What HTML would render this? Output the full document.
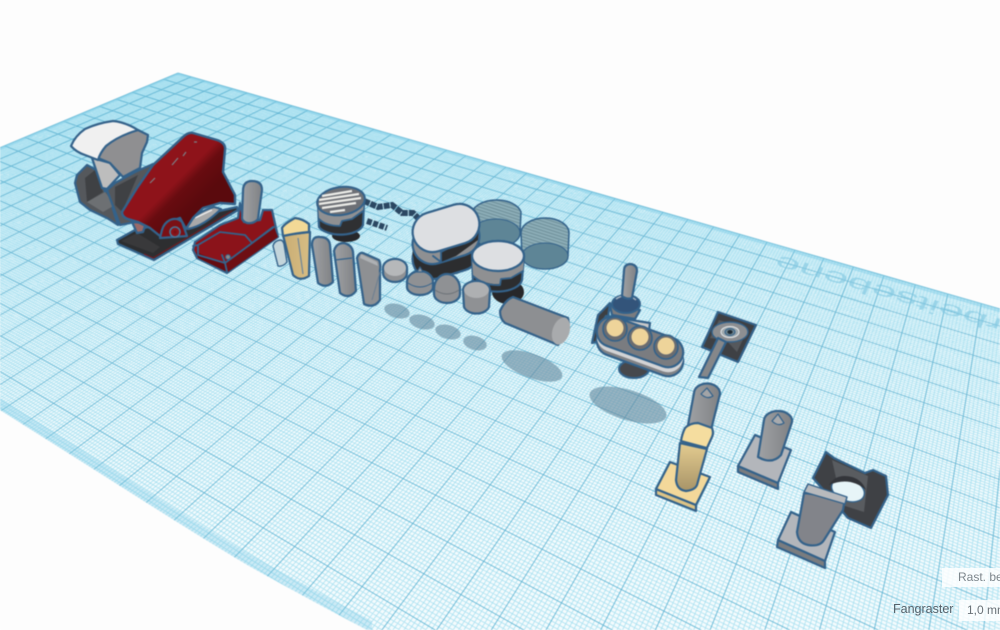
<!DOCTYPE html>
<html><head><meta charset="utf-8"><style>
html,body{margin:0;padding:0;background:#fdfdfd;width:1000px;height:630px;overflow:hidden}
#s{position:absolute;left:0;top:0;filter:blur(.5px)}
.o{stroke:#34628a;stroke-width:2.2;stroke-linejoin:round;stroke-linecap:round}
.t{stroke:#34628a;stroke-width:1.8;fill:none;stroke-linejoin:round;stroke-linecap:round}
.ui{position:absolute;font-family:"Liberation Sans",sans-serif;font-size:12px;white-space:nowrap}
</style></head><body>
<svg id="s" width="1000" height="630" viewBox="0 0 1000 630" xmlns="http://www.w3.org/2000/svg">
<defs>
<linearGradient id="red" gradientUnits="userSpaceOnUse" x1="172" y1="157" x2="208" y2="193"><stop offset="0.4" stop-color="#8e131a"/><stop offset="0.6" stop-color="#680c10"/><stop offset="1" stop-color="#5a0a0d"/></linearGradient>
<linearGradient id="cy" x1="0" y1="0" x2="1" y2="0"><stop offset="0" stop-color="#a0a2a5"/><stop offset="1" stop-color="#7f8184"/></linearGradient>
<linearGradient id="tn" x1="0" y1="0" x2="1" y2="0"><stop offset="0" stop-color="#c9ad74"/><stop offset="1" stop-color="#d7bd84"/></linearGradient>
<linearGradient id="tn2" x1="0" y1="0" x2="0" y2="1"><stop offset="0" stop-color="#e4cc90"/><stop offset="1" stop-color="#a89468"/></linearGradient>
<pattern id="h" width="3" height="3" patternUnits="userSpaceOnUse" patternTransform="rotate(18)"><rect width="3" height="3" fill="#8fb0ba"/><rect width="3" height="1.4" fill="#74959f"/></pattern>
</defs>
<g id="grid"></g>
<text transform="matrix(-1.03,-.295,.2,-.44,778,255)" text-anchor="end" font-family="Liberation Sans,sans-serif" font-size="42" fill="#7fc6e0" fill-opacity=".62">Arbeitsebene</text>

<!-- shadows -->
<g fill="#66899e" fill-opacity=".62">
<ellipse cx="397" cy="311" rx="13" ry="7" transform="rotate(15 397 311)"/>
<ellipse cx="422" cy="322" rx="13" ry="7" transform="rotate(15 422 322)"/>
<ellipse cx="448" cy="332" rx="13" ry="7" transform="rotate(15 448 332)"/>
<ellipse cx="475" cy="343" rx="12" ry="7" transform="rotate(15 475 343)"/>
<ellipse cx="532" cy="366" rx="32" ry="12" transform="rotate(20 532 366)"/>
<ellipse cx="628" cy="405" rx="40" ry="15" transform="rotate(17 628 405)"/>
</g>

<!-- back lever bracket -->
<path class="o" fill="#55585c" d="M75 183 L77 175 L87 165 L100 172 L105 192 L107 190 L118 225 L107 218 L90 210 L80 202 Z"/>
<path fill="#3f4144" d="M85 178 L95 170 L103 192 L87 202 Z"/>
<path fill="#6d7073" d="M87 202 L105 192 L115 205 L103 212 Z"/>
<!-- lever -->
<path class="o" fill="#bdbdbd" d="M92 158 L102 188 L107 189 L120 175 L110 163 Z"/>
<path class="o" fill="#8f8f91" d="M98 158 Q99 152 103 147 Q110 139 120 135 L138 130 L148 135 L147 142 L142 153 L140 168 L123 177 L110 163 Z"/>
<path class="o" fill="#f0f0f0" d="M71 146 Q75 136 85 129 Q98 123 113 121 Q125 122 138 130 Q118 136 106 146 Q100 153 98 160 L85 155 Q76 152 71 146 Z"/>
<!-- right cheek -->
<path class="o" fill="#55585c" d="M107 190 L115 183 L135 172 L153 164 L160 168 L135 222 L120 225 Z"/>
<path fill="#3f4144" d="M115 187 L138 175 L122 212 L115 205 Z"/>

<!-- black plate -->
<path class="o" fill="#2d2e30" d="M117 240 L135 230 L215 212 L237 207 L238 210 L154 260 L118 244 Z"/>
<path fill="#39393b" d="M121 241 L137 233 L160 247 L153 253 Z"/>
<path d="M144 254 L153 258 L232 211" stroke="#7a1a20" stroke-width="1" fill="none"/>
<!-- silver sliver -->
<path class="o" fill="#a9a9a9" d="M186 226 Q196 212 214 207 L221 209 Q204 226 188 229 Z"/>
<path d="M195 218 L212 210" stroke="#eee" stroke-width="1.4"/>
<path class="o" fill="#9a6a68" d="M132 222 L146 223 L143 232 L137 233 Z"/>
<!-- red cover -->
<path class="o" fill="url(#red)" style="stroke-width:2.4" d="M122 212 L137 188 L153 165 L183 137 Q188 132 193 133 L217 140 Q226 143 225 150 L223 172 L235 195 L235 204 L220 203 L203 208 L193 218 L186 229 L180 218 L168 222 L163 232 L160 236 L150 228 L138 222 L128 219 Q122 217 122 212 Z"/>
<path d="M150 183 L155 178 M172 165 L178 158 M183 156 L186 152 M194 142 L197 142" stroke="#7d7f86" stroke-width="1.2"/>
<!-- hinge -->
<path class="o" fill="#7a1015" d="M160 238 L162 230 Q164 223 170 220 Q177 217 182 222 L187 236 Z"/>
<circle cx="175" cy="232" r="5" fill="#8a141a" stroke="#4a7595" stroke-width="1.6"/>
<circle cx="175" cy="232" r="1.7" fill="#7a1015"/>

<!-- red box -->
<path class="o" fill="#8b131a" d="M195 242 L220 225 L238 218 L240 203 L244 222 L260 220 L263 210 L272 210 L278 237 L227 273 L197 258 L193 250 Z"/>
<path fill="#640b10" d="M196 252 L225 264 L227 272 L198 258 Z"/>
<path fill="#6e0e13" d="M226 263 L274 227 L278 237 L228 272 Z"/>
<path class="t" d="M198 245 L220 232 L245 235 L252 243 L273 227 M198 255 L225 263 L222 255 M225 263 L227 272 M225 263 L274 227 M193 246 L198 245 L198 255"/>
<circle cx="228" cy="257" r="2.4" fill="#8a8a8a" stroke="#34628a" stroke-width="1"/>
<!-- peg on box -->
<path class="o" fill="url(#cy)" d="M243 191 Q243 181 252 181 Q262 181 262 190 L258 219 Q254 224 247 223 Q242 221 242 218 Z"/>
<!-- glass -->
<path stroke="#34628a" stroke-width="1.4" stroke-linejoin="round" fill="#c3d5db" d="M273 246 Q274 241 280 240 Q283 240 284 244 L287 262 Q283 267 278 266 Z"/>
<!-- tan -->
<path class="o" fill="url(#tn)" d="M283 235 L293 275 Q300 282 309 276 L310 232 Z"/>
<path class="o" fill="#f3d996" d="M282 228 Q284 224 295 218 Q303 219 309 224 L309 232 Q297 233 283 236 Z"/>
<path d="M298 238 L303 274" stroke="#6b8499" stroke-width="1.2"/>
<!-- grey pegs -->
<path class="o" fill="url(#cy)" d="M312 245 Q312 236 320 237 Q329 237 330 245 L333 282 Q326 289 318 283 Z"/>
<path class="o" fill="url(#cy)" d="M334 251 Q336 243 344 243 Q352 245 353 252 L356 291 Q349 300 340 293 Z"/>
<path d="M335 260 L352 258" stroke="#34628a" stroke-width="1.2"/>
<path class="o" fill="#8e9093" d="M357 258 Q359 252 363 253 L379 260 Q381 264 380 270 L380 300 Q374 309 364 304 Z"/>
<path fill="#aeb1b4" d="M361 254 L377 262 L378 266 L360 258Z"/>
<path d="M380 272 L372 300" stroke="#6b7e90" stroke-width="1"/>

<!-- chain -->
<path d="M364 201 L378 207 L392 205 L402 213 L413 213 L421 221" stroke="#2b4762" stroke-width="6" fill="none" stroke-dasharray="6 1"/>
<path d="M367 221 L387 228" stroke="#2b4762" stroke-width="6" fill="none" stroke-dasharray="5 1.5"/>
<!-- striped cylinder -->
<ellipse cx="346" cy="236" rx="14" ry="6" fill="#26272a"/>
<path class="o" fill="#2f3032" d="M318 203 A23 12 0 0 1 364 203 L363 225 A23 12 0 0 1 319 227 Z"/>
<path fill="#8f9092" d="M318 206 L319 219 Q326 226 340 226 L342 221 L352 219 L363 211 L364 203 Z"/>
<path class="t" d="M319 219 Q326 226 340 226 L342 221 L352 219 L363 211"/>
<ellipse cx="341" cy="201" rx="24" ry="14" transform="rotate(-8 341 201)" fill="#6d7076" stroke="#34628a" stroke-width="2"/>
<path d="M322 196 L352 191 M319 200 L359 194 M319 204 L361 198 M322 208 L356 203 M330 212 L345 210" stroke="#ecece8" stroke-width="2.2"/>
<!-- translucent cylinders -->
<path stroke="#34628a" stroke-width="1.5" fill="url(#h)" d="M472 212 A25 15 0 0 1 521 212 L520 233 A24 14 0 0 1 472 233 Z"/>
<ellipse cx="496" cy="233" rx="24" ry="14" fill="#5e8596" stroke="#34628a"/>
<path stroke="#34628a" stroke-width="1.5" fill="url(#h)" d="M521 233 A24 15 0 0 1 569 233 L568 256 A23 13 0 0 1 522 256 Z"/>
<ellipse cx="545" cy="256" rx="23" ry="13" fill="#5e8596" stroke="#34628a"/>
<!-- big oval -->
<ellipse cx="448" cy="268" rx="16" ry="7" fill="#26272a"/>
<rect x="-34" y="-20" width="68" height="40" rx="20" transform="translate(446 255) rotate(-17)" class="o" fill="#2c2d2f"/>
<rect x="-34" y="-20" width="68" height="40" rx="20" transform="translate(446 248) rotate(-17)" fill="#2c2d2f"/>
<rect x="-34" y="-20" width="68" height="40" rx="20" transform="translate(446 240) rotate(-17)" class="o" fill="#8f9092"/>
<path fill="#2c2d2f" d="M441 252 L441 262 L456 256 L478 240 L479 226 L460 241Z"/>
<path class="t" d="M433 256 L441 262 L441 252 L460 242 L479 226"/>
<rect x="-34" y="-20" width="68" height="40" rx="20" transform="translate(446 228) rotate(-17)" class="o" fill="#dddfe2"/>
<!-- round cyl -->
<ellipse cx="508" cy="292" rx="16" ry="12" fill="#26272a"/>
<path class="o" fill="#2c2d2f" d="M472 256 A26 15 0 0 1 524 256 L522 280 A25 13 0 0 1 473 282 Z"/>
<path fill="#8f9092" d="M472 258 L473 275 Q484 285 500 284 L501 279 L511 278 L523 271 L524 258Z"/>
<path class="t" d="M473 276 Q484 286 500 285 L501 279 L511 278 L523 271"/>
<ellipse cx="498" cy="256" rx="26" ry="15" class="o" fill="#dddfe2"/>
<!-- small shapes -->
<path class="o" fill="#8f9194" d="M383 268 A12 9 0 0 1 407 268 L407 273 A12 9 0 0 1 383 273 Z"/>
<ellipse cx="395" cy="268" rx="11" ry="8" fill="#b6b8ba"/>
<path class="o" fill="#8f9194" d="M407 282 A13 11 0 0 1 433 282 L433 287 A13 8 0 0 1 407 287 Z"/>
<path class="o" fill="#9a9c9f" style="stroke-width:1.2" d="M417 272 L420 267 L423 272Z"/>
<path class="t" style="stroke-width:1" d="M408 283 Q420 291 432 283"/>
<path class="o" fill="#8f9194" d="M434 289 A13 15 0 0 1 460 289 L460 294 A13 9 0 0 1 434 294 Z"/>
<path d="M435 290 Q447 298 459 290" stroke="#6c7277" fill="none"/>
<path class="o" fill="#8f9194" d="M463 290 A13.5 9 0 0 1 490 290 L489 307 A13 9 0 0 1 464 307 Z"/>
<ellipse cx="476.500" cy="290" rx="12.500" ry="8" fill="#aeb0b2"/>
<!-- long cylinder -->
<path class="o" fill="#8d8f92" d="M500 311 Q505 300 513 297 L568 318 Q570 326 566 334 L558 345 L505 323 Q500 319 500 311 Z"/>
<ellipse cx="561" cy="331" rx="8.5" ry="14" fill="#a9abad" transform="rotate(18 561 331)"/>

<!-- toggle -->
<ellipse cx="634" cy="369" rx="15" ry="9" fill="#46484c" stroke="#34628a" stroke-width="2"/>
<path class="o" fill="#3d3f42" d="M592 343 L598 315 L610 303 L605 340 Z"/>
<path class="o" fill="#c9c9c9" d="M606 316 L650 323 L648 338 L600 326 Z"/>
<path class="o" fill="#7a7c80" d="M610 305 L640 310 L635 319 L612 315 Z"/>
<ellipse cx="626" cy="304" rx="14" ry="9" fill="#33547a" stroke="#34628a" stroke-width="2"/>
<path d="M616 299 Q626 292 636 300" stroke="#a9b6c2" stroke-width="1.4" fill="none"/>
<path class="o" fill="url(#cy)" d="M624 271 Q624 264 631 264 Q637 265 637 271 L632 298 Q627 300 622 296 Z"/>
<!-- capsule -->
<rect x="-45" y="-15" width="90" height="30" rx="15" transform="translate(640 351) rotate(20)" class="o" fill="#808286"/>
<rect x="-45" y="-15" width="90" height="30" rx="15" transform="translate(640 347) rotate(20)" fill="#d2d3d5"/>
<rect x="-45" y="-15" width="90" height="30" rx="15" transform="translate(640 342) rotate(20)" class="o" fill="#7a7c80"/>
<circle cx="615" cy="329" r="12" fill="#6a6c70" stroke="#34628a" stroke-width="1.6"/>
<circle cx="640" cy="338" r="12" fill="#6a6c70" stroke="#34628a" stroke-width="1.6"/>
<circle cx="666" cy="347" r="12" fill="#6a6c70" stroke="#34628a" stroke-width="1.6"/>
<circle cx="615" cy="328" r="8.500" fill="#eed49a"/>
<circle cx="640" cy="337" r="8.500" fill="#eed49a"/>
<circle cx="666" cy="346" r="8.500" fill="#eed49a"/>

<!-- dark square -->
<path class="o" fill="#3e4044" d="M718 312 L756 325 L738 362 L702 347 Z"/>
<path fill="#55585c" d="M710 338 L719 320 L748 329 L737 352 L726 340Z"/>
<ellipse cx="730" cy="332" rx="18" ry="10" fill="#8d8f92" stroke="#34628a" stroke-width="1.4"/>
<ellipse cx="730" cy="332" rx="9" ry="5.5" fill="#9fa8ac" stroke="#e6eaec"/>
<ellipse cx="730" cy="332" rx="5" ry="3.5" fill="#6e8590" stroke="#34628a"/>
<ellipse cx="730" cy="332" rx="2.6" ry="2" fill="#1e2a33"/>
<path class="o" fill="#85878a" d="M718 338 L726 342 L708 378 L699 377 Z"/>

<!-- cylinder behind tan -->
<path class="o" fill="url(#cy)" d="M694 393 A13 10 0 0 1 720 394 L711 430 L688 425 Z"/>
<path class="o" style="stroke-width:1.2" fill="#a2a4a7" d="M701 394 L707 388 L713 396 Q707 400 701 394Z"/>
<!-- tan peg + base -->
<path class="o" fill="#dcc386" d="M656 489 L696 505 L696 511 L656 495 Z"/>
<path class="o" fill="#f3d89a" d="M670 462 L710 477 L696 505 L656 489 Z"/>
<path class="o" fill="url(#tn2)" d="M680 443 L676 480 Q677 490 686 491 Q695 490 697 485 L707 449 Z"/>
<path class="o" fill="#f5dd9f" d="M685 428 Q690 423 698 423 L712 428 Q714 433 712 437 L707 448 L681 441 Q682 434 685 428 Z"/>

<!-- grey peg + base -->
<path class="o" fill="#7a7c7f" d="M738 466 L778 483 L778 489 L738 472 Z"/>
<path class="o" fill="#b3b6bb" d="M755 435 L791 450 L778 483 L738 466 Z"/>
<path class="o" fill="url(#cy)" d="M764 420 A14 10 0 0 1 792 422 L781 455 Q772 465 758 457 Z"/>
<path class="o" style="stroke-width:1.2" fill="#a8aaad" d="M772 421 L778 414 L784 423 Q778 427 772 421Z"/>

<!-- bottom bracket -->
<path class="o" fill="#3f4145" d="M813 478 L826 452 L834 458 L865 473 L873 470 L886 476 L888 495 L871 528 L848 518 Z"/>
<path fill="#595c60" d="M832 460 L868 476 L864 512 L842 505Z"/>
<ellipse cx="848" cy="490" rx="17" ry="11" fill="#e7f5f8" stroke="#34628a" stroke-width="1.4" transform="rotate(20 848 490)"/>
<path d="M829 485 Q836 473 852 477 Q862 480 866 490 Q850 476 829 485Z" fill="#33353a"/>
<!-- wedge base -->
<path class="o" fill="#7a7c7f" d="M777 547 L825 568 L825 561 L778 540 Z"/>
<path class="o" fill="#b3b6bb" d="M791 512 L835 532 L825 561 L778 540 Z"/>
<path class="o" fill="#82848a" d="M804 493 L797 532 Q798 543 808 545 Q820 547 824 540 L843 510 L845 498 Z"/>
<path fill="#b8babd" stroke="#34628a" stroke-linejoin="round" stroke-width="1.4" d="M808 484 L847 497 L845 504 L804 492 Z"/>
</svg>
<div class="ui" style="left:942px;top:568px;width:58px;height:19px;background:rgba(255,255,255,.82);color:#7d868c;line-height:19px;text-indent:16px;font-size:12px;overflow:hidden">Rast. bearbeiten</div>
<div class="ui" style="left:893px;top:602px;color:#56626b;font-size:12.5px;line-height:14px">Fangraster</div>
<div class="ui" style="left:959px;top:600px;width:41px;height:21px;background:rgba(255,255,255,.82);color:#6a7278;line-height:20px;text-indent:8px;overflow:hidden">1,0 mm</div>
<script>
(function(){
var V1=[-1139,-305],V2=[1079,-305],P0=[178,73],a=-.000997,b=-.001615,U=560,W=215;
function P(u,v){var A=a*u,B=b*v,w=A+B+1;return ((A*V1[0]+B*V2[0]+P0[0])/w).toFixed(1)+' '+((A*V1[1]+B*V2[1]+P0[1])/w).toFixed(1);}
function poly(p,f){return '<path d="M'+p.join('L')+'Z" fill="'+f+'"/>';}
var min='',maj='',i,s;
for(i=0;i<=U;i++){s='M'+P(i,0)+'L'+P(i,W);if(i%10==0)maj+=s;else min+=s;}
for(i=0;i<=W;i++){s='M'+P(0,i)+'L'+P(U,i);if(i%10==0)maj+=s;else min+=s;}
var h='';
h+=poly([P(0,0),P(U,0),P(U,W),P(0,W)],'#f4fbfd');
h+='<path d="'+min+'" stroke="#a8e0f0" stroke-width=".8" fill="none"/>';
h+='<path d="'+maj+'" stroke="#62b6d4" stroke-width=".9" fill="none"/>';
var c='#7fcbe6',m=2.2;
h+='<g fill-opacity=".45">'+poly([P(0,0),P(U,0),P(U,m),P(0,m)],c)+poly([P(0,0),P(m,0),P(m,W),P(0,W)],c)+'</g>';
h+='<path d="M0 398L150 493Q210 531 249 554Q310 588 372 621L372 630L0 630Z" fill="#7fcbe6" fill-opacity=".34"/>';
h+='<path d="M0 410L150 505Q210 543 249 566Q310 600 367 630L0 630Z" fill="#fdfdfd"/>';
document.getElementById('grid').innerHTML=h;
})();
</script>
</body></html>
